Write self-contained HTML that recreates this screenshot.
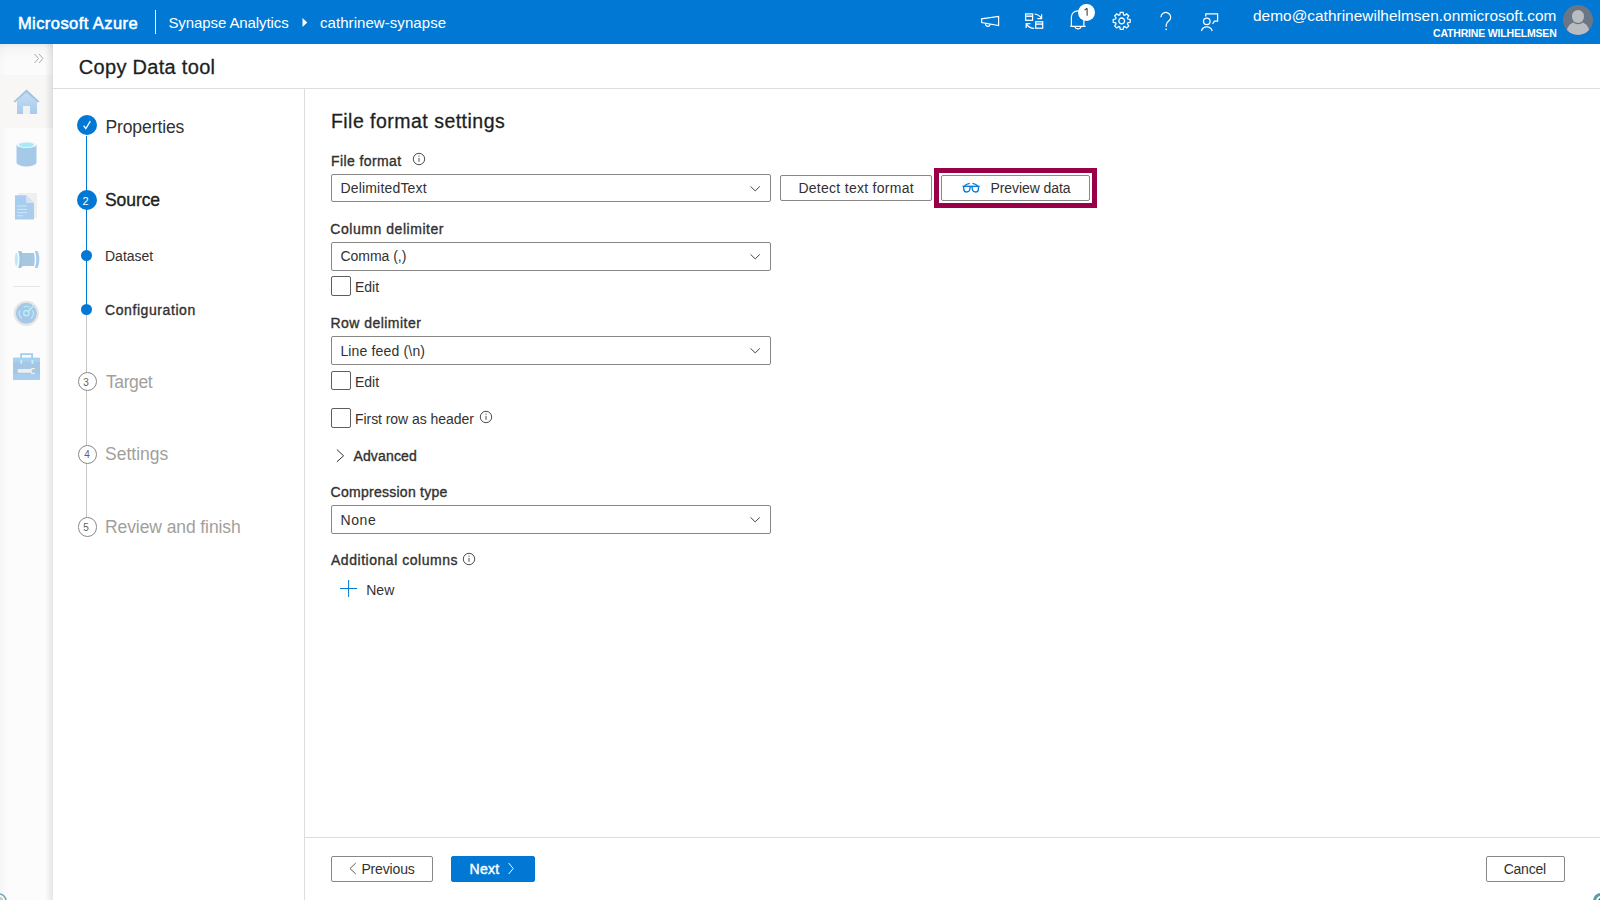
<!DOCTYPE html>
<html><head><meta charset="utf-8">
<style>
*{box-sizing:border-box;margin:0;padding:0}
html,body{width:1600px;height:900px;overflow:hidden;background:#fff;font-family:"Liberation Sans",sans-serif;color:#323130}
.abs{position:absolute}
.txt{position:absolute;white-space:nowrap;line-height:1}
</style></head><body>
<div class="abs" style="left:0;top:0;width:1600px;height:44px;background:#0078d4"></div>
<div class="txt" style="left:17.90px;top:15.03px;font-size:16.5px;color:#fff;letter-spacing:0.436px;-webkit-text-stroke:0.55px #fff;">Microsoft Azure</div>
<div class="abs" style="left:155px;top:10px;width:1px;height:24px;background:#fff"></div>
<div class="txt" style="left:168.40px;top:15.30px;font-size:15px;color:#fff;letter-spacing:-0.088px;">Synapse Analytics</div>
<svg class="abs" style="left:301px;top:17px" width="8" height="11" viewBox="0 0 8 11"><path d="M1.5 1 L6.3 5.5 L1.5 10 Z" fill="#fff"/></svg>
<div class="txt" style="left:320.00px;top:15.30px;font-size:15px;color:#fff;letter-spacing:0.062px;">cathrinew-synapse</div>
<svg class="abs" style="left:970px;top:0" width="260" height="44" viewBox="970 0 260 44" fill="none" stroke="#fff" stroke-width="1.25">
    <path d="M981.6 18.8 L981.6 22.6 L998.6 25.6 L998.6 16.4 Z"/>
    <path d="M985.6 23.6 A2.3 2.3 0 0 0 990.2 24.4"/>
    <rect x="1025.6" y="13.9" width="7" height="6.4"/>
    <path d="M1025.6 16.2 H1032.6" stroke-width="1.4"/>
    <rect x="1035.7" y="21.8" width="7" height="6.4"/>
    <path d="M1035.7 24.1 H1042.7" stroke-width="1.4"/>
    <path d="M1034.5 14 Q1039 14.5 1041.6 18.4 M1041.6 14.3 V18.6 H1037.3"/>
    <path d="M1034.2 28.4 Q1029 28 1026.2 23.8 M1026.2 28 V23.6 H1030.5"/>
    <path d="M1071.4 26.3 V17 A5.3 5.3 0 0 1 1083.9 17 V26.3 M1070.2 26.4 H1085.6"/>
    <path d="M1075 26.6 A3.1 3.1 0 0 0 1081 26.6"/>
    <path d="M1160.9 17.2 A4.9 4.7 0 1 1 1169.2 20.6 Q1166.3 22.7 1166.2 25 V26.7"/>
    <circle cx="1166.2" cy="29.4" r="0.8" fill="#fff" stroke="none"/>
    <path d="M1205.8 16.5 V13.9 H1217.6 V21.2 H1214.4 L1212.6 23.8"/>
    <circle cx="1206.8" cy="21.3" r="3.3"/>
    <path d="M1201.4 31 A5.6 5.6 0 0 1 1212.2 31"/>
    <g transform="translate(1121.7 20.9)"><path d="M-1.89 -6.11 L-1.45 -8.48 L1.45 -8.48 L1.89 -6.11 L2.99 -5.66 L4.96 -7.02 L7.02 -4.96 L5.66 -2.99 L6.11 -1.89 L8.48 -1.45 L8.48 1.45 L6.11 1.89 L5.66 2.99 L7.02 4.96 L4.96 7.02 L2.99 5.66 L1.89 6.11 L1.45 8.48 L-1.45 8.48 L-1.89 6.11 L-2.99 5.66 L-4.96 7.02 L-7.02 4.96 L-5.66 2.99 L-6.11 1.89 L-8.48 1.45 L-8.48 -1.45 L-6.11 -1.89 L-5.66 -2.99 L-7.02 -4.96 L-4.96 -7.02 L-2.99 -5.66 Z"/><circle cx="0" cy="0" r="2.9" stroke-width="1.3"/></g>
</svg>
<div class="abs" style="left:1077.9px;top:4.4px;width:16.8px;height:16.8px;border-radius:50%;background:#fff"></div>
<svg class="abs" style="left:1080px;top:5px" width="12" height="14" viewBox="1080 5 12 14"><path d="M1087.1 8.2 V15.7 M1087.1 8.3 L1084.6 10.1" fill="none" stroke="#3b3a39" stroke-width="1.05"/></svg>
<div class="txt" style="left:1253.00px;top:7.66px;font-size:15.4px;color:#fff;letter-spacing:0.032px;">demo@cathrinewilhelmsen.onmicrosoft.com</div>
<div class="txt" style="left:1433.00px;top:28.31px;font-size:10.5px;color:#fff;letter-spacing:-0.178px;font-weight:700;">CATHRINE WILHELMSEN</div>
<div class="abs" style="left:1563px;top:5px;width:30px;height:30px;border-radius:50%;background:#6b7685;overflow:hidden">
  <div class="abs" style="left:3.8px;top:17px;width:22.4px;height:16px;border-radius:9px 9px 2px 2px;background:#b9bcc0"></div>
  <div class="abs" style="left:9px;top:5px;width:12.2px;height:12.6px;border-radius:50%;background:#b9bcc0;box-shadow:0 0 0 1.3px #6b7685"></div>
</div>
<div id="nav" style="position:absolute;left:0;top:44px;width:53px;height:856px;background:linear-gradient(to right,#f6f6f6 0px,#fcfcfc 8px,#fcfcfc 45px,#e6e6e6 53px)">
  <div class="abs" style="left:0;top:0;width:53px;height:31px;background:linear-gradient(to right,rgba(0,0,0,0.02) 0px,rgba(0,0,0,0) 8px,rgba(0,0,0,0) 45px,rgba(0,0,0,0.1) 53px),linear-gradient(#ebebeb 0px,#f6f6f6 5px,#fbfbfb 16px,#fcfcfc 31px)"></div>
  <svg class="abs" style="left:33px;top:9px" width="12" height="11" viewBox="0 0 12 11"><path d="M1.5 1 L5.5 5.5 L1.5 10 M6 1 L10 5.5 L6 10" fill="none" stroke="#a19f9d" stroke-width="0.9"/></svg>
  <div class="abs" style="left:0;top:31px;width:53px;height:53px;background:linear-gradient(to right,rgba(0,0,0,0) 45px,rgba(0,0,0,0.1) 53px),#f8f7f5"></div>
  <svg class="abs" style="left:12px;top:44px" width="30" height="28" viewBox="0 0 30 28">
    <defs><linearGradient id="hg" x1="0" y1="0" x2="0" y2="1"><stop offset="0" stop-color="#c6dcf3"/><stop offset="1" stop-color="#a6cbee"/></linearGradient></defs>
    <path d="M5 13 L15 4 L25 13 L25 26 L5 26 Z" fill="url(#hg)"/>
    <path d="M1.5 13.5 L14.5 1.5 L27.5 13.5 L26 14.5 L14.5 4.5 L3 14.5 Z" fill="#9fc3e3"/>
    <rect x="11" y="18" width="7" height="8" fill="#f1f1f1"/>
  </svg>
  <svg class="abs" style="left:15px;top:96px" width="23" height="28" viewBox="0 0 23 28">
    <path d="M1.5 4.5 L1.5 22.5 A10 4 0 0 0 21.5 22.5 L21.5 4.5 Z" fill="#a7c9e8"/>
    <ellipse cx="11.5" cy="4.5" rx="10" ry="3.6" fill="#f4f9fd"/>
    <ellipse cx="11.5" cy="4.8" rx="7.5" ry="2.4" fill="#a6ecf8"/>
  </svg>
  <svg class="abs" style="left:14px;top:148px" width="24" height="30" viewBox="0 0 24 30">
    <rect x="4" y="1" width="19" height="25" fill="#efefef"/>
    <path d="M1 3.3 L12 3.3 L20 11 L20 27.6 L1 27.6 Z" fill="#a8cdee"/>
    <path d="M12 3.3 L20 11 L12 11 Z" fill="#cfe2f7"/>
    <path d="M3 14 H13 M3 17.3 H13 M3 20.6 H13 M3 23.8 H9" stroke="#d8e8f7" stroke-width="0.9"/>
  </svg>
  <svg class="abs" style="left:10px;top:201px" width="35" height="28" viewBox="0 0 35 28">
    <path d="M8.1 5.9 L11 5.9 L12.6 7.9 L12.6 21.1 L11 23.1 L8.1 23.1 Q10.9 14.5 8.1 5.9 Z" fill="#a3c3df"/>
    <path d="M12 8.1 L24 8.1 Q25.4 14.5 24 20.9 L12 20.9 Z" fill="#a7c6e0"/>
    <path d="M24.9 5.9 L27.6 5.9 Q31.2 14.5 27.6 23.1 L24.9 23.1 Q27.6 14.5 24.9 5.9 Z" fill="#a6cbec"/>
    <ellipse cx="6.4" cy="14.5" rx="1.9" ry="6.9" fill="#b5eaf7" stroke="#f6fbfd" stroke-width="0.8"/>
  </svg>
  <div class="abs" style="left:13px;top:242px;width:27px;height:1px;background:#e6e6e6"></div>
  <svg class="abs" style="left:13px;top:256px" width="28" height="28" viewBox="0 0 28 28">
    <circle cx="13.3" cy="13.3" r="12.6" fill="#e6e6e6"/>
    <circle cx="13.3" cy="13.3" r="10.5" fill="#a6c8e6"/>
    <path d="M6.96 10.34 A7 7 0 0 0 8.80 18.66 M19.64 10.34 A7 7 0 0 1 17.80 18.66 M10.68 6.81 A7 7 0 0 1 16.59 7.12" fill="none" stroke="#b8f0fb" stroke-width="1.1"/>
    <circle cx="13.3" cy="13.3" r="2.6" fill="none" stroke="#b8f0fb" stroke-width="1.3"/>
    <path d="M14.8 11.8 L20.3 6.3" fill="none" stroke="#b8f0fb" stroke-width="1.5"/>
  </svg>
  <svg class="abs" style="left:8px;top:304px" width="38" height="36" viewBox="0 0 38 36">
    <rect x="13.1" y="6.1" width="11" height="5" fill="none" stroke="#a6cdee" stroke-width="1.8"/>
    <rect x="5" y="9.8" width="27" height="22" rx="1" fill="#a6c7e4"/>
    <rect x="5" y="9.8" width="27" height="4.2" fill="#a7d0f1"/>
    <rect x="5" y="26" width="27" height="5.8" rx="1" fill="#a8cdee"/>
    <rect x="12.4" y="12" width="1.8" height="4" fill="#bdf2fb"/>
    <rect x="23.5" y="12" width="1.8" height="4" fill="#bdf2fb"/>
    <rect x="9.8" y="21" width="13" height="3.8" rx="0.6" fill="#eeeeee"/>
    <path d="M26.9 20 L24.2 20 Q22.2 20 22.2 22.9 Q22.2 25.9 24.2 25.9 L26.9 25.9 L26.9 24.7 L24.6 24.7 Q23.7 24.7 23.7 22.9 Q23.7 21.2 24.6 21.2 L26.9 21.2 Z" fill="#eeeeee"/>
  </svg>
</div>
<div class="abs" style="left:52px;top:88px;width:1548px;height:1px;background:#dddddd"></div>
<div class="txt" style="left:78.80px;top:57.07px;font-size:20px;color:#201f1e;letter-spacing:0.300px;-webkit-text-stroke:0.28px #201f1e;">Copy Data tool</div>
<div class="abs" style="left:304px;top:89px;width:1px;height:811px;background:#dddddd"></div>
<div class="abs" style="left:86px;top:136px;width:1px;height:173px;background:#0078d4"></div>
<div class="abs" style="left:86px;top:315px;width:1px;height:212px;background:#c8c6c4"></div>
<div class="abs" style="left:77px;top:115px;width:20px;height:20px;border-radius:50%;background:#0078d4"></div>
<svg class="abs" style="left:77px;top:115px" width="20" height="20" viewBox="0 0 20 20"><path d="M6.6 10.6 L8.8 13.6 L13.4 6.2" fill="none" stroke="#fff" stroke-width="1.3"/></svg>
<div class="txt" style="left:105.40px;top:118.89px;font-size:17.5px;color:#323130;letter-spacing:-0.089px;">Properties</div>
<div class="abs" style="left:77px;top:190px;width:20px;height:20px;border-radius:50%;background:#0078d4"></div>
<div class="txt" style="left:82.50px;top:195.69px;font-size:11px;color:#fff;">2</div>
<div class="txt" style="left:105.00px;top:191.89px;font-size:17.5px;color:#201f1e;letter-spacing:-0.080px;-webkit-text-stroke:0.35px #201f1e;">Source</div>
<div class="abs" style="left:81px;top:250px;width:11px;height:11px;border-radius:50%;background:#0078d4"></div>
<div class="txt" style="left:105.00px;top:249.15px;font-size:14px;color:#323130;">Dataset</div>
<div class="abs" style="left:81px;top:304px;width:11px;height:11px;border-radius:50%;background:#0078d4"></div>
<div class="txt" style="left:105.00px;top:302.95px;font-size:14px;color:#323130;letter-spacing:0.583px;-webkit-text-stroke:0.35px #323130;">Configuration</div>
<div class="abs" style="left:77.5px;top:372.1px;width:19.2px;height:19.2px;border-radius:50%;border:1px solid #8a8886;background:#fff"></div>
<div class="txt" style="left:83.20px;top:378.44px;font-size:10px;color:#605e5c;">3</div>
<div class="txt" style="left:106.00px;top:374.19px;font-size:17.5px;color:#a19f9d;letter-spacing:-0.400px;">Target</div>
<div class="abs" style="left:77.5px;top:444.6px;width:19.2px;height:19.2px;border-radius:50%;border:1px solid #8a8886;background:#fff"></div>
<div class="txt" style="left:84.20px;top:449.94px;font-size:10px;color:#605e5c;">4</div>
<div class="txt" style="left:105.00px;top:446.19px;font-size:17.5px;color:#a19f9d;">Settings</div>
<div class="abs" style="left:77.5px;top:517.4px;width:19.2px;height:19.2px;border-radius:50%;border:1px solid #8a8886;background:#fff"></div>
<div class="txt" style="left:83.20px;top:522.74px;font-size:10px;color:#605e5c;">5</div>
<div class="txt" style="left:105.00px;top:519.19px;font-size:17.5px;color:#a19f9d;letter-spacing:-0.088px;">Review and finish</div>
<div class="txt" style="left:330.90px;top:112.39px;font-size:19.5px;color:#201f1e;letter-spacing:0.479px;-webkit-text-stroke:0.28px #201f1e;">File format settings</div>
<div class="txt" style="left:331.00px;top:153.75px;font-size:14px;color:#323130;letter-spacing:0.400px;-webkit-text-stroke:0.35px #323130;">File format</div>
<svg class="abs" style="left:411.3px;top:151px" width="16" height="16" viewBox="0 0 16 16"><circle cx="8" cy="8" r="5.7" fill="none" stroke="#3b3a39" stroke-width="0.9"/><path d="M8 6.9 V10.8" stroke="#3b3a39" stroke-width="0.9"/><circle cx="8" cy="5.1" r="0.55" fill="#3b3a39"/></svg>
<div class="abs" style="left:331px;top:174px;width:440px;height:28px;border:1px solid #8a8886;border-radius:2px;background:#fff"></div>
<div class="txt" style="left:340.40px;top:181.25px;font-size:14px;color:#323130;letter-spacing:0.183px;">DelimitedText</div>
<svg class="abs" style="left:748px;top:182.80px" width="14" height="10" viewBox="0 0 14 10"><path d="M2.6 3.4 L7.2 7.9 L11.8 3.4" fill="none" stroke="#3b3a39" stroke-width="0.95"/></svg>
<div class="abs" style="left:780px;top:175px;width:152px;height:26px;border:1px solid #8a8886;border-radius:2px;background:#fff"></div>
<div class="txt" style="left:798.40px;top:181.15px;font-size:14px;color:#323130;letter-spacing:0.282px;">Detect text format</div>
<div class="abs" style="left:934px;top:168px;width:163px;height:40px;border:5px solid #990048"></div>
<div class="abs" style="left:941px;top:175px;width:149px;height:26px;border:1px solid #8a8886;border-radius:2px;background:#fff"></div>
<svg class="abs" style="left:960px;top:180px" width="22" height="15" viewBox="960 180 22 15" fill="none" stroke="#0078d4" stroke-width="1.3">
  <path d="M962.6 186.3 H979.6"/>
  <path d="M963.5 186.3 L964 190.5 Q964.3 192 966.5 192 Q969.4 192 969.8 189.5 L970.3 186.3"/>
  <path d="M971.9 186.3 L972.4 189.5 Q972.8 192 975.7 192 Q977.9 192 978.2 190.5 L978.7 186.3"/>
  <path d="M964.5 185.8 Q966.8 183.8 969.7 183.3 M972.5 183.3 Q975.4 183.8 977.7 185.8"/>
</svg>
<div class="txt" style="left:990.50px;top:181.05px;font-size:14px;color:#323130;letter-spacing:-0.073px;">Preview data</div>
<div class="txt" style="left:330.30px;top:222.05px;font-size:14px;color:#323130;letter-spacing:0.547px;-webkit-text-stroke:0.35px #323130;">Column delimiter</div>
<div class="abs" style="left:331px;top:242px;width:440px;height:29px;border:1px solid #8a8886;border-radius:2px;background:#fff"></div>
<div class="txt" style="left:340.40px;top:249.15px;font-size:14px;color:#323130;letter-spacing:-0.012px;">Comma (,)</div>
<svg class="abs" style="left:748px;top:250.80px" width="14" height="10" viewBox="0 0 14 10"><path d="M2.6 3.4 L7.2 7.9 L11.8 3.4" fill="none" stroke="#3b3a39" stroke-width="0.95"/></svg>
<div class="abs" style="left:331px;top:276px;width:20px;height:20px;border:1px solid #605e5c;border-radius:2px;background:#fff"></div>
<div class="txt" style="left:355.00px;top:280.15px;font-size:14px;color:#323130;">Edit</div>
<div class="txt" style="left:330.50px;top:316.15px;font-size:14px;color:#323130;letter-spacing:0.458px;-webkit-text-stroke:0.35px #323130;">Row delimiter</div>
<div class="abs" style="left:331px;top:336px;width:440px;height:29px;border:1px solid #8a8886;border-radius:2px;background:#fff"></div>
<div class="txt" style="left:340.40px;top:344.15px;font-size:14px;color:#323130;letter-spacing:0.162px;">Line feed (\n)</div>
<svg class="abs" style="left:748px;top:344.80px" width="14" height="10" viewBox="0 0 14 10"><path d="M2.6 3.4 L7.2 7.9 L11.8 3.4" fill="none" stroke="#3b3a39" stroke-width="0.95"/></svg>
<div class="abs" style="left:331px;top:371px;width:20px;height:19px;border:1px solid #605e5c;border-radius:2px;background:#fff"></div>
<div class="txt" style="left:355.00px;top:375.15px;font-size:14px;color:#323130;">Edit</div>
<div class="abs" style="left:331px;top:408px;width:20px;height:20px;border:1px solid #605e5c;border-radius:2px;background:#fff"></div>
<div class="txt" style="left:355.00px;top:412.05px;font-size:14px;color:#323130;letter-spacing:-0.056px;">First row as header</div>
<svg class="abs" style="left:478px;top:409px" width="16" height="16" viewBox="0 0 16 16"><circle cx="8" cy="8" r="5.7" fill="none" stroke="#3b3a39" stroke-width="0.9"/><path d="M8 6.9 V10.8" stroke="#3b3a39" stroke-width="0.9"/><circle cx="8" cy="5.1" r="0.55" fill="#3b3a39"/></svg>
<svg class="abs" style="left:333px;top:446px" width="14" height="20" viewBox="0 0 14 20"><path d="M3.9 3.6 L10.6 9.8 L3.9 15.8" fill="none" stroke="#323130" stroke-width="1"/></svg>
<div class="txt" style="left:353.40px;top:448.85px;font-size:14px;color:#323130;letter-spacing:0.171px;-webkit-text-stroke:0.35px #323130;">Advanced</div>
<div class="txt" style="left:330.60px;top:484.75px;font-size:14px;color:#323130;letter-spacing:0.260px;-webkit-text-stroke:0.35px #323130;">Compression type</div>
<div class="abs" style="left:331px;top:505px;width:440px;height:29px;border:1px solid #8a8886;border-radius:2px;background:#fff"></div>
<div class="txt" style="left:340.40px;top:513.15px;font-size:14px;color:#323130;letter-spacing:0.633px;">None</div>
<svg class="abs" style="left:748px;top:513.80px" width="14" height="10" viewBox="0 0 14 10"><path d="M2.6 3.4 L7.2 7.9 L11.8 3.4" fill="none" stroke="#3b3a39" stroke-width="0.95"/></svg>
<div class="txt" style="left:331.00px;top:552.85px;font-size:14px;color:#323130;letter-spacing:0.529px;-webkit-text-stroke:0.35px #323130;">Additional columns</div>
<svg class="abs" style="left:460.5px;top:550.9px" width="16" height="16" viewBox="0 0 16 16"><circle cx="8" cy="8" r="5.7" fill="none" stroke="#3b3a39" stroke-width="0.9"/><path d="M8 6.9 V10.8" stroke="#3b3a39" stroke-width="0.9"/><circle cx="8" cy="5.1" r="0.55" fill="#3b3a39"/></svg>
<svg class="abs" style="left:338px;top:578px" width="21" height="21" viewBox="0 0 21 21"><path d="M10.6 2 V19 M2 10.5 H19" fill="none" stroke="#0078d4" stroke-width="1"/></svg>
<div class="txt" style="left:366.20px;top:583.15px;font-size:14px;color:#323130;letter-spacing:0.050px;">New</div>
<div class="abs" style="left:305px;top:837px;width:1295px;height:1px;background:#dddddd"></div>
<div class="abs" style="left:331px;top:856px;width:102px;height:26px;border:1px solid #8a8886;border-radius:2px;background:#fff"></div>
<svg class="abs" style="left:346px;top:860px" width="14" height="18" viewBox="0 0 14 18"><path d="M9.8 3 L4 8.5 L9.8 14" fill="none" stroke="#605e5c" stroke-width="1"/></svg>
<div class="txt" style="left:361.40px;top:862.15px;font-size:14px;color:#323130;letter-spacing:-0.143px;">Previous</div>
<div class="abs" style="left:451px;top:856px;width:84px;height:26px;border:1px solid #0078d4;border-radius:2px;background:#0078d4"></div>
<div class="txt" style="left:469.50px;top:862.15px;font-size:14px;color:#fff;letter-spacing:0.300px;-webkit-text-stroke:0.42px #fff;">Next</div>
<svg class="abs" style="left:504px;top:860px" width="14" height="18" viewBox="0 0 14 18"><path d="M4.6 3 L9.2 8.5 L4.6 14" fill="none" stroke="#fff" stroke-width="1"/></svg>
<div class="abs" style="left:1486px;top:856px;width:79px;height:26px;border:1px solid #8a8886;border-radius:2px;background:#fff"></div>
<div class="txt" style="left:1503.70px;top:862.25px;font-size:14px;color:#323130;letter-spacing:-0.240px;">Cancel</div>
<svg class="abs" style="left:1580px;top:880px" width="20" height="20" viewBox="1580 880 20 20"><circle cx="1601" cy="901" r="6.5" fill="none" stroke="#1d7f8e" stroke-width="3" opacity="0.75"/><circle cx="1600.5" cy="900.5" r="2.2" fill="#555"/></svg>
<svg class="abs" style="left:0;top:880px" width="20" height="20" viewBox="0 880 20 20"><circle cx="-1" cy="901" r="7" fill="none" stroke="#1d7f8e" stroke-width="1.6" opacity="0.65"/><circle cx="-0.5" cy="900.5" r="3.5" fill="#c8c8c8"/></svg>
</body></html>
